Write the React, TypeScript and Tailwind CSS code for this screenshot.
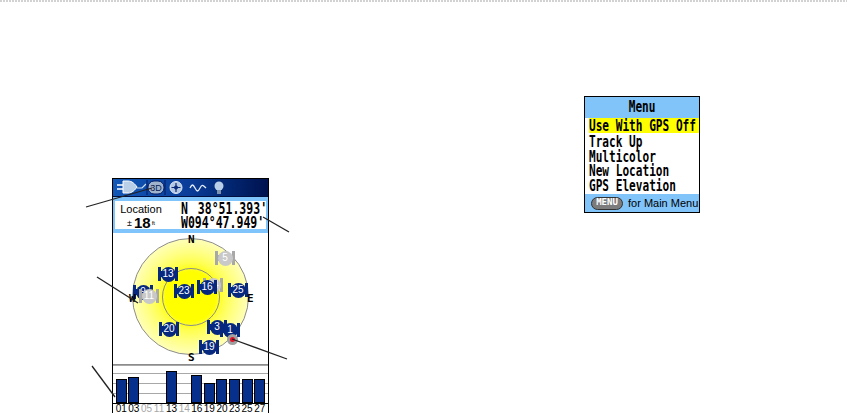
const mono = 'font-["DejaVu_Sans_Mono",monospace] font-bold';

const satellites = [
  { id: '5', x: 224, y: 257, off: true },
  { id: '14', x: 212, y: 284, off: true },
  { id: '13', x: 167, y: 273 },
  { id: '23', x: 183, y: 290 },
  { id: '16', x: 206, y: 286 },
  { id: '25', x: 237, y: 289 },
  { id: '20', x: 168, y: 328 },
  { id: '3', x: 216, y: 326 },
  { id: '1', x: 229, y: 329 },
  { id: '19', x: 208, y: 346 },
  { id: '9', x: 142, y: 291 },
  { id: '11', x: 148, y: 295, off: true },
];

const bars = [
  { id: '01', h: 24 },
  { id: '03', h: 26 },
  { id: '05', h: 0 },
  { id: '11', h: 0 },
  { id: '13', h: 32 },
  { id: '14', h: 0 },
  { id: '16', h: 28 },
  { id: '19', h: 20 },
  { id: '20', h: 24 },
  { id: '23', h: 24 },
  { id: '25', h: 24 },
  { id: '27', h: 24 },
];

const menuItems = ['Track Up', 'Multicolor', 'New Location', 'GPS Elevation'];

const Satellite = ({ id, x, y, off }: { id: string; x: number; y: number; off?: boolean }) => (
  // device origin is 112,178
  <div
    className="absolute flex h-[14px] w-[20px] items-center justify-center"
    style={{ left: x - 112 - 10, top: y - 178 - 7 }}
  >
    <div className={off ? 'absolute inset-y-0 inset-x-0 border-x-[3px] border-[#a8a8a8]' : 'absolute inset-y-0 inset-x-0 border-x-[3px] border-[#06287f]'} />
    <div className={off ? 'absolute inset-x-0 h-[6px] bg-[#a8a8a8]' : 'absolute inset-x-0 h-[6px] bg-[#06287f]'} />
    <div
      className={
        off
          ? 'relative flex h-[15px] w-[15px] shrink-0 items-center justify-center rounded-full bg-[#c8c8c8] text-[10px] leading-none text-white'
          : 'relative flex h-[15px] w-[15px] shrink-0 items-center justify-center rounded-full bg-[#06287f] text-[10px] leading-none text-white'
      }
    >
      <span className='font-["Liberation_Sans",sans-serif]'>{id}</span>
    </div>
  </div>
);

const StatusBar = () => (
  <div className="flex h-[18px] items-center border-b border-[#001040] bg-gradient-to-r from-[#1158b8] via-[#0a3c98] to-[#00124f]">
    <svg width="92" height="17" viewBox="0 0 92 17" className="ml-[3px] shrink-0">
      {/* plug */}
      <path d="M1 6h6M1 10h6" stroke="#fff" strokeWidth="1.5" />
      <path d="M7 2h5c4 0 7 3 9 6-2 3-5 6-9 6H7z" fill="#b9cfe8" stroke="#fff" />
      <path d="M21 9h5l4-4" fill="none" stroke="#cfe0f4" strokeWidth="1.2" />
      {/* 3D */}
      <path d="M31 1v15M49 1v15" stroke="#001a66" strokeWidth="1" />
      <rect x="32" y="2" width="16" height="13" rx="6" fill="#9fb4cc" stroke="#001a66" />
      <text x="40" y="12" textAnchor="middle" fontSize="9" fontFamily="Liberation Sans" fill="#0a1d52">3D</text>
      {/* compass */}
      <circle cx="60" cy="8.5" r="6" fill="#b4c8e2" stroke="#dfe9f6" />
      <path d="M60 4v9M55.5 8.5h9" stroke="#0a2a7a" strokeWidth="1.2" />
      <circle cx="60" cy="8.5" r="2" fill="#0a2a7a" />
      {/* wave */}
      <path d="M74 9c2-4 3-4 5 0s3 4 5 0 3-3 6 0" fill="none" stroke="#e4eefa" strokeWidth="1.3" />
    </svg>
    <svg width="12" height="16" viewBox="0 0 12 16" className="ml-[5px] shrink-0">
      <circle cx="6" cy="6" r="4.5" fill="#b9cfe8" />
      <rect x="4" y="10" width="4" height="4" fill="#7f93ad" />
    </svg>
  </div>
);

const LocationPanel = () => (
  <div className="bg-[#7fc4fa] px-[2px] py-[4px]">
    <div className="flex h-[28px] bg-white pt-px text-black">
      <div className='flex w-[52px] shrink-0 flex-col items-center font-["Liberation_Sans",sans-serif]'>
        <span className="text-[11px] leading-[14px]">Location</span>
        <span className="flex h-[14px] items-center text-[9px] leading-[14px]">
          ±<span className="ml-0.5 text-[15px] font-bold">18</span>
          <span className="ml-px text-[6px]">ft</span>
        </span>
      </div>
      <div className={`${mono} ml-[14px] flex origin-left scale-x-[0.72] flex-col whitespace-pre text-[16px] leading-[14px]`}>
        <span>
          N<span className="ml-[4px]"> 38°51.393'</span>
        </span>
        <span>W094°47.949'</span>
      </div>
    </div>
  </div>
);

const SkyView = () => (
  <div className="flex h-[131px] items-start justify-center bg-white pt-[5px]">
    <div className="relative flex h-[117px] w-[117px] items-center justify-center rounded-full border border-[#8c8c8c] bg-[radial-gradient(circle,#ffff00_0%,#ffff00_30%,#ffff50_42%,#ffff80_54%,#ffffa8_66%,#ffffd0_78%,#ffffec_88%,#ffffff_96%)]">
      <div className="h-[58px] w-[58px] rounded-full border border-[#8c8c8c]" />
    </div>
  </div>
);

const SignalBars = () => (
  <div className="flex flex-col">
    <div className="grid h-[39px] grid-cols-12 items-end border-t border-[#8c8c8c] bg-[repeating-linear-gradient(180deg,#a8a8a8_0_1px,#ffffff_1px_10px)] bg-[position:0_8px] px-[2px]">
      {bars.map((b) => (
        <div key={b.id} className="flex justify-center">
          {b.h > 0 && (
            <div className="w-[11px] border border-black bg-[#06308c]" style={{ height: b.h }} />
          )}
        </div>
      ))}
    </div>
    <div className='grid h-[10px] grid-cols-12 border-t border-black bg-white px-[2px] font-["Liberation_Sans",sans-serif] text-[10px] leading-[10px]'>
      {bars.map((b) => (
        <span key={b.id} className={b.h > 0 ? 'text-center text-black' : 'text-center text-[#a8a8a8]'}>
          {b.id}
        </span>
      ))}
    </div>
  </div>
);

const SatellitePage = () => (
  <div className="relative ml-[112px] mt-[176px] h-[235px] w-[157px] shrink-0 border-x border-t border-black">
    <StatusBar />
    <LocationPanel />
    <SkyView />
    <SignalBars />
    {/* plot overlays */}
    {satellites.map((s) => (
      <Satellite key={s.id} id={s.id} x={s.x} y={s.y} off={s.off} />
    ))}
    {[
      { l: 'N', x: 191, y: 239 },
      { l: 'S', x: 191, y: 357 },
      { l: 'W', x: 132, y: 298 },
      { l: 'E', x: 250, y: 298 },
    ].map((c) => (
      <span
        key={c.l}
        className={`${mono} absolute text-[11px] leading-none text-black`}
        style={{ left: c.x - 112 - 4, top: c.y - 178 - 6 }}
      >
        {c.l}
      </span>
    ))}
    <div className="absolute left-[114px] top-[155px] flex h-[11px] w-[11px] items-center justify-center rounded-full bg-[#a0a0a0]">
      <div className="h-[5px] w-[5px] rounded-full bg-[#e8102a]" />
    </div>
  </div>
);

const MenuCard = () => (
  <div className="ml-[315px] mt-[94px] flex h-[117px] w-[116px] shrink-0 flex-col border border-black bg-[#80c4fa]">
    <div className={`${mono} flex h-[21px] items-center justify-center`}>
      <span className="scale-x-[0.74] text-[15px]">Menu</span>
    </div>
    <div className="flex h-[76px] flex-col bg-white pl-[4px]">
      <div className={`${mono} mb-px h-[15px] bg-[#ffff00] text-[15px] leading-[17px]`}>
        <span className="inline-block origin-left scale-x-[0.74] whitespace-pre">Use With GPS Off</span>
      </div>
      {menuItems.map((item) => (
        <div key={item} className={`${mono} h-[14.5px] text-[15px] leading-[17px]`}>
          <span className="inline-block origin-left scale-x-[0.74] whitespace-pre">{item}</span>
        </div>
      ))}
    </div>
    <div className='flex flex-1 items-center pl-[6px] font-["Liberation_Sans",sans-serif] text-[11px] text-black'>
      <span className={`${mono} flex h-[13px] w-[32px] shrink-0 items-center justify-center rounded-full border border-[#333] bg-[#7c7c7c] text-[9px] text-white`}>
        MENU
      </span>
      <span className="ml-[5px] whitespace-nowrap">for Main Menu</span>
    </div>
  </div>
);

export default function App() {
  return (
    <div className="relative h-[413px] w-[847px] overflow-hidden bg-white">
      <div className="h-[2px] bg-[repeating-linear-gradient(90deg,#d2d2d2_0_2px,#ffffff_2px_3px)]" />
      <div className="flex items-start">
        <SatellitePage />
        <MenuCard />
      </div>
      {/* callout lines */}
      <svg className="absolute inset-0" width="847" height="413" viewBox="0 0 847 413">
        <g stroke="#222" strokeWidth="1.3" fill="none">
          <path d="M86 207 152 188" />
          <path d="M289 232 263 217" />
          <path d="M97 277 138 303" />
          <path d="M287 359 232 339" />
          <path d="M92 366 115 397" />
        </g>
      </svg>
    </div>
  );
}
